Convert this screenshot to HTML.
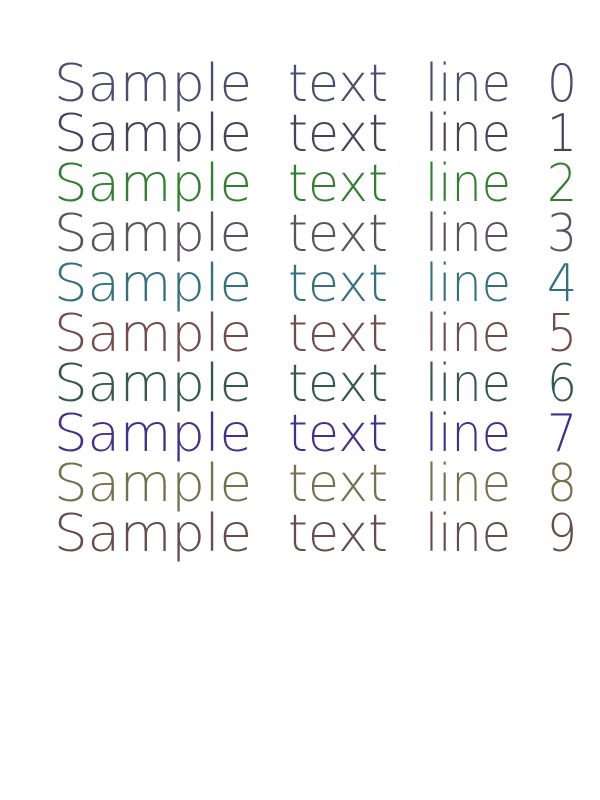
<!DOCTYPE html>
<html><head><meta charset="utf-8"><style>
html,body{margin:0;padding:0;background:#fff;width:600px;height:800px;overflow:hidden}
svg text{font-family:"DejaVu Sans","Liberation Sans",sans-serif;font-weight:200;font-size:52px}
#lines{opacity:0.8}
</style></head><body>
<svg width="600" height="800" viewBox="0 0 600 800" xmlns="http://www.w3.org/2000/svg">
<g id="lines">
<g fill="#202050"><text x="54" y="101" textLength="198" lengthAdjust="spacingAndGlyphs">Sample</text><text x="288" y="101" textLength="100" lengthAdjust="spacingAndGlyphs">text</text><text x="425" y="101" textLength="86" lengthAdjust="spacingAndGlyphs">line</text><text x="547" y="101" textLength="30" lengthAdjust="spacingAndGlyphs">0</text></g>
<g fill="#201030"><text x="54" y="151" textLength="198" lengthAdjust="spacingAndGlyphs">Sample</text><text x="288" y="151" textLength="100" lengthAdjust="spacingAndGlyphs">text</text><text x="425" y="151" textLength="86" lengthAdjust="spacingAndGlyphs">line</text><text x="547" y="151" textLength="30" lengthAdjust="spacingAndGlyphs">1</text></g>
<g fill="#006000"><text x="54" y="201" textLength="198" lengthAdjust="spacingAndGlyphs">Sample</text><text x="288" y="201" textLength="100" lengthAdjust="spacingAndGlyphs">text</text><text x="425" y="201" textLength="86" lengthAdjust="spacingAndGlyphs">line</text><text x="547" y="201" textLength="30" lengthAdjust="spacingAndGlyphs">2</text></g>
<g fill="#302838"><text x="54" y="251" textLength="198" lengthAdjust="spacingAndGlyphs">Sample</text><text x="288" y="251" textLength="100" lengthAdjust="spacingAndGlyphs">text</text><text x="425" y="251" textLength="86" lengthAdjust="spacingAndGlyphs">line</text><text x="547" y="251" textLength="30" lengthAdjust="spacingAndGlyphs">3</text></g>
<g fill="#005060"><text x="54" y="301" textLength="198" lengthAdjust="spacingAndGlyphs">Sample</text><text x="288" y="301" textLength="100" lengthAdjust="spacingAndGlyphs">text</text><text x="425" y="301" textLength="86" lengthAdjust="spacingAndGlyphs">line</text><text x="547" y="301" textLength="30" lengthAdjust="spacingAndGlyphs">4</text></g>
<g fill="#502020"><text x="54" y="351" textLength="198" lengthAdjust="spacingAndGlyphs">Sample</text><text x="288" y="351" textLength="100" lengthAdjust="spacingAndGlyphs">text</text><text x="425" y="351" textLength="86" lengthAdjust="spacingAndGlyphs">line</text><text x="547" y="351" textLength="30" lengthAdjust="spacingAndGlyphs">5</text></g>
<g fill="#003020"><text x="54" y="401" textLength="198" lengthAdjust="spacingAndGlyphs">Sample</text><text x="288" y="401" textLength="100" lengthAdjust="spacingAndGlyphs">text</text><text x="425" y="401" textLength="86" lengthAdjust="spacingAndGlyphs">line</text><text x="547" y="401" textLength="30" lengthAdjust="spacingAndGlyphs">6</text></g>
<g fill="#100070"><text x="54" y="451" textLength="198" lengthAdjust="spacingAndGlyphs">Sample</text><text x="288" y="451" textLength="100" lengthAdjust="spacingAndGlyphs">text</text><text x="425" y="451" textLength="86" lengthAdjust="spacingAndGlyphs">line</text><text x="547" y="451" textLength="30" lengthAdjust="spacingAndGlyphs">7</text></g>
<g fill="#505020"><text x="54" y="501" textLength="198" lengthAdjust="spacingAndGlyphs">Sample</text><text x="288" y="501" textLength="100" lengthAdjust="spacingAndGlyphs">text</text><text x="425" y="501" textLength="86" lengthAdjust="spacingAndGlyphs">line</text><text x="547" y="501" textLength="30" lengthAdjust="spacingAndGlyphs">8</text></g>
<g fill="#402020"><text x="54" y="551" textLength="198" lengthAdjust="spacingAndGlyphs">Sample</text><text x="288" y="551" textLength="100" lengthAdjust="spacingAndGlyphs">text</text><text x="425" y="551" textLength="86" lengthAdjust="spacingAndGlyphs">line</text><text x="547" y="551" textLength="30" lengthAdjust="spacingAndGlyphs">9</text></g>
</g>
</svg>
</body></html>
